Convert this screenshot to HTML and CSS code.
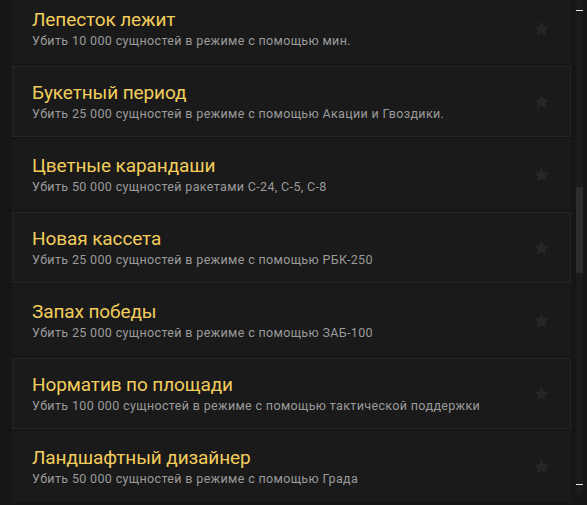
FILE: index.html
```html
<!DOCTYPE html>
<html lang="ru">
<head>
<meta charset="utf-8">
<link rel="stylesheet" href="styles.css">
</head>
<body>
<div class="page">
  <div class="list">
    <div class="item plain">
      <div class="text"><div class="title">Лепесток лежит</div><div class="desc">Убить 10 000 сущностей в режиме с помощью мин.</div></div>
      <svg class="star" viewBox="0 0 24 24"><path d="M12 1.5l3.1 7.2 7.8.7-5.9 5.1 1.8 7.7L12 18.1l-6.8 4.1 1.8-7.7-5.9-5.1 7.8-.7z"/></svg>
    </div>
    <div class="item boxed">
      <div class="text"><div class="title">Букетный период</div><div class="desc">Убить 25 000 сущностей в режиме с помощью Акации и Гвоздики.</div></div>
      <svg class="star" viewBox="0 0 24 24"><path d="M12 1.5l3.1 7.2 7.8.7-5.9 5.1 1.8 7.7L12 18.1l-6.8 4.1 1.8-7.7-5.9-5.1 7.8-.7z"/></svg>
    </div>
    <div class="item plain">
      <div class="text"><div class="title">Цветные карандаши</div><div class="desc">Убить 50 000 сущностей ракетами С-24, С-5, С-8</div></div>
      <svg class="star" viewBox="0 0 24 24"><path d="M12 1.5l3.1 7.2 7.8.7-5.9 5.1 1.8 7.7L12 18.1l-6.8 4.1 1.8-7.7-5.9-5.1 7.8-.7z"/></svg>
    </div>
    <div class="item boxed">
      <div class="text"><div class="title">Новая кассета</div><div class="desc">Убить 25 000 сущностей в режиме с помощью РБК-250</div></div>
      <svg class="star" viewBox="0 0 24 24"><path d="M12 1.5l3.1 7.2 7.8.7-5.9 5.1 1.8 7.7L12 18.1l-6.8 4.1 1.8-7.7-5.9-5.1 7.8-.7z"/></svg>
    </div>
    <div class="item plain">
      <div class="text"><div class="title">Запах победы</div><div class="desc">Убить 25 000 сущностей в режиме с помощью ЗАБ-100</div></div>
      <svg class="star" viewBox="0 0 24 24"><path d="M12 1.5l3.1 7.2 7.8.7-5.9 5.1 1.8 7.7L12 18.1l-6.8 4.1 1.8-7.7-5.9-5.1 7.8-.7z"/></svg>
    </div>
    <div class="item boxed">
      <div class="text"><div class="title">Норматив по площади</div><div class="desc">Убить 100 000 сущностей в режиме с помощью тактической поддержки</div></div>
      <svg class="star" viewBox="0 0 24 24"><path d="M12 1.5l3.1 7.2 7.8.7-5.9 5.1 1.8 7.7L12 18.1l-6.8 4.1 1.8-7.7-5.9-5.1 7.8-.7z"/></svg>
    </div>
    <div class="item plain">
      <div class="text"><div class="title">Ландшафтный дизайнер</div><div class="desc">Убить 50 000 сущностей в режиме с помощью Града</div></div>
      <svg class="star" viewBox="0 0 24 24"><path d="M12 1.5l3.1 7.2 7.8.7-5.9 5.1 1.8 7.7L12 18.1l-6.8 4.1 1.8-7.7-5.9-5.1 7.8-.7z"/></svg>
    </div>
  </div>
  <div class="scrollbar">
    <div class="arrow"></div>
    <div class="track"><div class="thumb"></div></div>
    <div class="arrow"></div>
  </div>
</div>
</body>
</html>
```
FILE: styles.css
```css
html, body {
  margin: 0;
  padding: 0;
  background: #161616;
  overflow: hidden;
}
.page {
  width: 587px;
  height: 505px;
  display: flex;
  overflow: hidden;
}
.list {
  width: 559px;
  margin-left: 12px;
  margin-top: -7px;
  display: flex;
  flex-direction: column;
  gap: 2px;
  flex-shrink: 0;
}
.item {
  box-sizing: border-box;
  height: 71px;
  flex-shrink: 0;
  display: flex;
  align-items: center;
  justify-content: space-between;
  padding: 0 19px 0 19px;
  background: #1a1a1a;
  border: 1px solid #1a1a1a;
}
.item.boxed {
  border-color: #252525;
}
.text {
  display: flex;
  flex-direction: column;
}
.title {
  font-family: "Roboto", "Liberation Sans", sans-serif;
  font-size: 19px;
  line-height: 22px;
  color: #f2cd5c;
  margin-top: 0;
  letter-spacing: -0.1px;
}
.desc {
  font-family: "Roboto", "Liberation Sans", sans-serif;
  font-size: 12.5px;
  line-height: 16px;
  color: #9b9b9b;
  margin-top: 2px;
  letter-spacing: 0.35px;
}
.star {
  width: 17px;
  height: 17px;
  fill: #262626;
  margin-right: 1px;
}
.scrollbar {
  margin-left: 5px;
  width: 7px;
  display: flex;
  flex-direction: column;
  background: #1b1b1b;
  height: 495px;
}
.arrow {
  height: 11px;
  position: relative;
}
.arrow::after {
  content: "";
  position: absolute;
  left: 0;
  right: 0;
  top: 10px;
  height: 1px;
  background: #e8e8e8;
}
.scrollbar .arrow:last-child::after {
  top: 0;
}
.track {
  flex: 1;
  padding-top: 176px;
}
.thumb {
  height: 86px;
  background: #2c2c2c;
}
```
